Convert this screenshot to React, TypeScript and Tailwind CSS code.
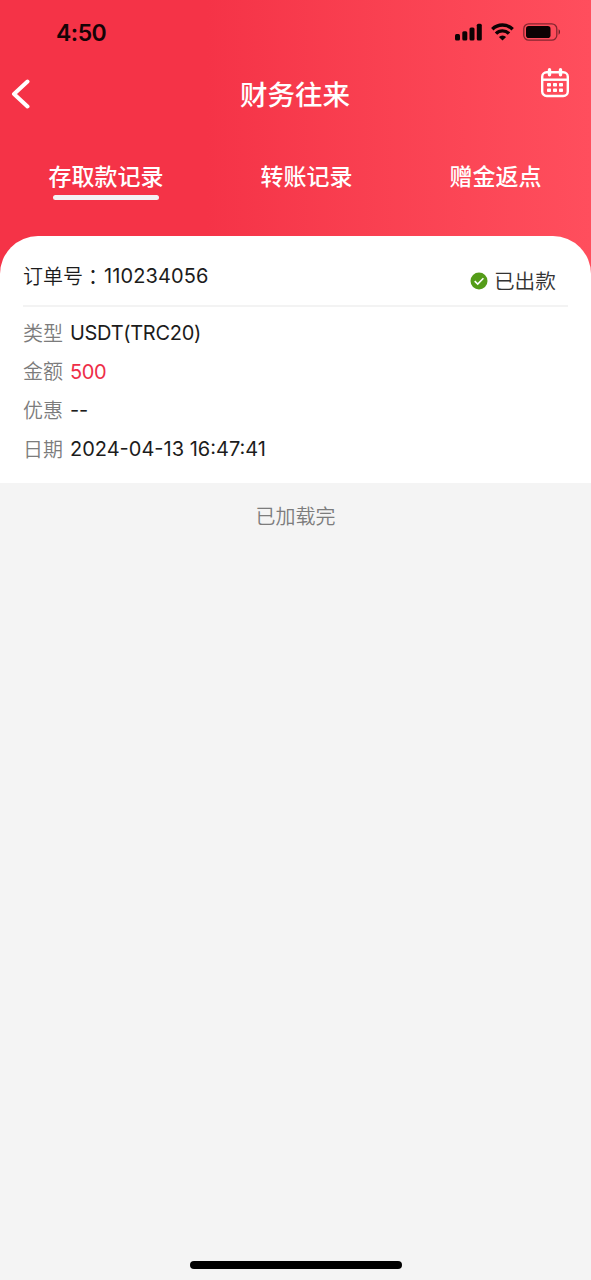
const tabs = [
  { label: "存取款记录", active: true },
  { label: "转账记录", active: false },
  { label: "赠金返点", active: false },
];

const rows = [
  { label: "类型", value: "USDT(TRC20)", color: "text-[#1c1c1c]", spacing: "tracking-[-0.3px]" },
  { label: "金额", value: "500", color: "text-[#ee2e48]", spacing: "tracking-[-0.4px]" },
  { label: "优惠", value: "--", color: "text-[#1c1c1c]", spacing: "tracking-[-0.3px]" },
  { label: "日期", value: "2024-04-13 16:47:41", color: "text-[#1c1c1c]", spacing: "tracking-normal" },
];

function StatusBar() {
  return (
    <div className="flex h-16 items-center justify-between pr-[30px] pl-14">
      <span className="pt-px text-[23px] leading-8 font-semibold tracking-[-0.5px] text-[#160306]">4:50</span>
      <div className="flex items-center gap-[9px] text-[#0c0203]">
        <svg width="27" height="18" viewBox="0 0 27 18" fill="currentColor">
          <rect x="0" y="11" width="5" height="6.5" rx="1.5" />
          <rect x="7.3" y="8.3" width="5" height="9.2" rx="1.5" />
          <rect x="14.5" y="4.6" width="5" height="12.9" rx="1.5" />
          <rect x="21.8" y="0.8" width="5" height="16.7" rx="1.5" />
        </svg>
        <svg width="23" height="18" viewBox="0 0 23 18" fill="none" stroke="currentColor" strokeWidth="3.4">
          <path d="M1.3 6.2a14.6 14.6 0 0 1 20.4 0" />
          <path d="M5 10.6a9.2 9.2 0 0 1 13 0" />
          <path d="M11.5 17.6 7.9 14a5 5 0 0 1 7.2 0z" fill="currentColor" stroke="none" />
        </svg>
        <svg width="38" height="18" viewBox="0 0 38 18">
          <rect x="0.8" y="0.8" width="33" height="16.4" rx="5" fill="none" stroke="currentColor" strokeOpacity="0.5" strokeWidth="1.3" />
          <rect x="3" y="3" width="24.5" height="12" rx="2.8" fill="currentColor" />
          <path d="M35.6 6.3c1.9.7 1.9 4.7 0 5.4z" fill="currentColor" fillOpacity="0.6" />
        </svg>
      </div>
    </div>
  );
}

function CalendarIcon() {
  return (
    <svg width="30" height="30" viewBox="0 0 30 30" fill="none" stroke="white" strokeWidth="2.4">
      <rect x="2.2" y="4.2" width="25.6" height="23.8" rx="4.5" />
      <path d="M2.2 11.7h25.6" />
      <path d="M9.5 1.8v5M20.5 1.8v5" strokeWidth="3.4" strokeLinecap="round" />
      <g fill="white" stroke="none">
        <rect x="7" y="15" width="4" height="3.5" rx="0.8" />
        <rect x="13" y="15" width="4" height="3.5" rx="0.8" />
        <rect x="19" y="15" width="4" height="3.5" rx="0.8" />
        <rect x="7" y="20.5" width="4" height="3.5" rx="0.8" />
        <rect x="13" y="20.5" width="4" height="3.5" rx="0.8" />
        <rect x="19" y="20.5" width="4" height="3.5" rx="0.8" />
      </g>
    </svg>
  );
}

export default function App() {
  return (
    <div
      lang="zh-CN"
      className="flex h-[1280px] w-full flex-col bg-[#f4f4f4] font-[Inter,'Noto_Sans_CJK_SC',sans-serif]"
    >
      <div className="bg-linear-to-r from-[#f53347] from-35% to-[#ff4e5d]">
        <StatusBar />

        <header className="grid h-[60px] grid-cols-[1fr_auto_1fr] items-center pr-[21px] pl-[11px]">
          <button aria-label="返回" className="-mr-2.5">
            <svg width="20" height="30" viewBox="0 0 20 30" fill="none" stroke="white" strokeWidth="4" strokeLinecap="round" strokeLinejoin="round">
              <path d="M16.5 2.5 3 15l13.5 12.5" />
            </svg>
          </button>
          <h1 className="pt-0.5 pl-[9px] text-[27.5px] leading-[58px] font-medium text-white">财务往来</h1>
          <button aria-label="日历" className="mb-[22px] justify-self-end">
            <CalendarIcon />
          </button>
        </header>

        <nav className="flex h-28 items-start justify-between pt-[37px] pr-[49.5px] pl-[48.5px]">
          {tabs.map((tab) => (
            <button key={tab.label} className="flex flex-col items-center text-[23px] leading-8 font-medium text-white">
              {tab.label}
              {tab.active && <span className="mt-0.5 h-[5px] w-[106px] rounded-full bg-[#f4f1f3]" />}
            </button>
          ))}
        </nav>

        <section className="h-[247px] rounded-t-[38px] bg-white px-[23px] text-[20px]">
          <div className="flex h-[71px] items-center justify-between border-b-2 border-[#f3f3f3] pt-3 pr-3">
            <div className="flex leading-8 text-[#1c1c1c]">
              <span className="pt-px font-[350]">订单号</span>
              <span className="pt-px font-['Noto_Sans_CJK_TC']" lang="zh-TW">：</span>
              <span className="pl-px tracking-[0.1px]">110234056</span>
            </div>
            <div className="mt-[9px] flex items-center gap-1.5 text-[#333333]">
              <svg width="18" height="18" viewBox="0 0 18 18" fill="none">
                <circle cx="9" cy="9" r="8.5" fill="#549c18" />
                <path d="m4.7 9.2 3 2.9 5.7-5.9" stroke="white" strokeWidth="1.6" />
              </svg>
              <span className="pt-px text-[20.7px] leading-8 font-[350]">已出款</span>
            </div>
          </div>
          <dl className="pt-[7px]">
            {rows.map((row) => (
              <div key={row.label} className="flex h-[38.6px] items-center gap-[7px]">
                <dt className="pt-px font-[350] text-[#7c7c7c]">{row.label}</dt>
                <dd className={`${row.color} ${row.spacing}`}>{row.value}</dd>
              </div>
            ))}
          </dl>
        </section>
      </div>

      <p className="pt-[18px] text-center text-[20px] leading-8 font-[350] text-[#7c7c7c]">已加载完</p>

      <div className="mx-auto mt-auto mb-[11px] h-2 w-[212px] rounded-full bg-black" />
    </div>
  );
}
